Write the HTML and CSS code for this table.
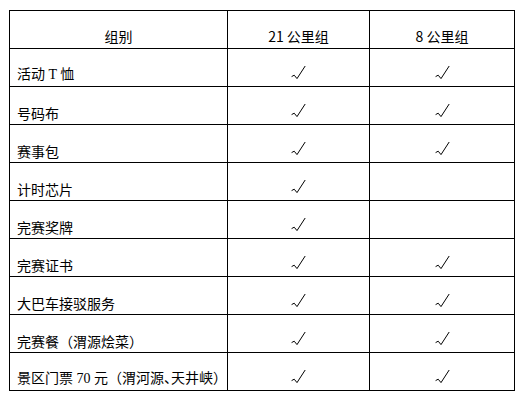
FILE: index.html
```html
<!DOCTYPE html>
<html lang="zh-CN">
<head>
<meta charset="utf-8">
<title>组别</title>
<link rel="stylesheet" href="styles.css">
</head>
<body>
<svg width="0" height="0" class="defs" aria-hidden="true">
  <symbol id="tick" viewBox="0 0 15 15">
    <path d="M0.6 11.6 L3.2 10.2 L6 13.6 L14.2 1" fill="none" stroke="#000" stroke-width="1"/>
  </symbol>
</svg>
<table class="grid">
  <colgroup>
    <col class="c1">
    <col class="c2">
    <col class="c3">
  </colgroup>
  <thead>
    <tr>
      <th>组别</th>
      <th>21 公里组</th>
      <th>8 公里组</th>
    </tr>
  </thead>
  <tbody>
    <tr><td class="name">活动<span class="latin"> T </span>恤</td><td class="mark"><svg class="tick"><use href="#tick"/></svg></td><td class="mark"><svg class="tick"><use href="#tick"/></svg></td></tr>
    <tr><td class="name">号码布</td><td class="mark"><svg class="tick"><use href="#tick"/></svg></td><td class="mark"><svg class="tick"><use href="#tick"/></svg></td></tr>
    <tr><td class="name">赛事包</td><td class="mark"><svg class="tick"><use href="#tick"/></svg></td><td class="mark"><svg class="tick"><use href="#tick"/></svg></td></tr>
    <tr><td class="name">计时芯片</td><td class="mark"><svg class="tick"><use href="#tick"/></svg></td><td class="mark"></td></tr>
    <tr><td class="name">完赛奖牌</td><td class="mark"><svg class="tick"><use href="#tick"/></svg></td><td class="mark"></td></tr>
    <tr><td class="name">完赛证书</td><td class="mark"><svg class="tick"><use href="#tick"/></svg></td><td class="mark"><svg class="tick"><use href="#tick"/></svg></td></tr>
    <tr><td class="name">大巴车接驳服务</td><td class="mark"><svg class="tick"><use href="#tick"/></svg></td><td class="mark"><svg class="tick"><use href="#tick"/></svg></td></tr>
    <tr><td class="name">完赛餐（渭源烩菜）</td><td class="mark"><svg class="tick"><use href="#tick"/></svg></td><td class="mark"><svg class="tick"><use href="#tick"/></svg></td></tr>
    <tr><td class="name">景区门票<span class="latin"> 70 </span>元（渭河源<span class="half">、</span>天井峡）</td><td class="mark"><svg class="tick"><use href="#tick"/></svg></td><td class="mark"><svg class="tick"><use href="#tick"/></svg></td></tr>
  </tbody>
</table>
</body>
</html>
```

FILE: styles.css
```css
html, body {
  margin: 0;
  padding: 0;
  background: #fff;
}

body {
  font-family: "Noto Sans CJK SC", "Noto Sans", sans-serif;
  font-size: 14px;
  color: #000;
}

.defs {
  position: absolute;
  width: 0;
  height: 0;
}

.grid {
  margin: 10px 0 0 9px;
  border-collapse: collapse;
  table-layout: fixed;
  width: 506px;
}

.c1 { width: 218px; }
.c2 { width: 142px; }
.c3 { width: 145px; }

.grid tr {
  height: 38px;
}

.grid th,
.grid td {
  border: 1px solid #000;
  padding: 0 0 1px 0;
  line-height: 20px;
  vertical-align: bottom;
  white-space: nowrap;
  font-weight: normal;
  text-align: center;
}

.grid th {
  padding-bottom: 2px;
}

.grid td.name {
  text-align: left;
  padding-left: 7px;
}

.latin {
  font-family: "Liberation Serif", serif;
}

.half {
  font-feature-settings: "halt";
}

.grid td.mark {
  padding-bottom: 6px;
}

.tick {
  display: block;
  width: 15px;
  height: 15px;
  margin: 0 auto;
}
```
